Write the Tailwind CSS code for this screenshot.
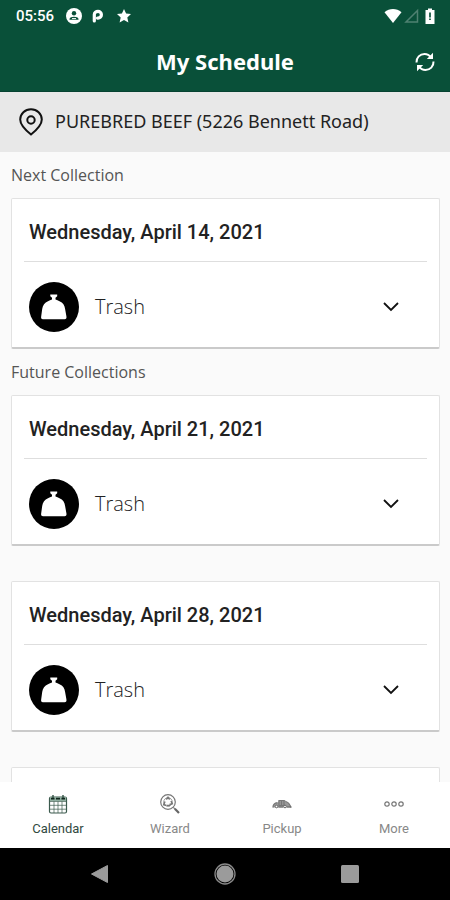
<!DOCTYPE html>
<html lang="en">
<head>
<meta charset="utf-8">
<meta name="viewport" content="width=device-width, initial-scale=1">
<title>My Schedule</title>
<script src="https://cdn.jsdelivr.net/npm/@tailwindcss/browser@4"></script>
</head>
<body class="bg-[#fafafa] font-['Open_Sans',sans-serif] text-[#222]">
<svg class="hidden" aria-hidden="true">
  <symbol id="bag" viewBox="0 0 50 50">
    <circle cx="25" cy="25" r="25" fill="#000"/>
    <path d="M21.300 12.500h6.900v1.800l-1.700 1.500v1.700c1.500.4 2.500 1.200 4 1.700 3.500 1.300 5.200 4 5.600 7.800l1.300 7.200c.4 2-.3 3-1.800 3H14c-1.600 0-2.200-1-1.800-3l1-7.200c.5-3.800 2.500-6.500 5.800-7.800 1.500-.5 2.500-1.300 4-1.700v-1.700l-1.700-1.500z" fill="#fff"/>
  </symbol>
  <symbol id="chevron" viewBox="0 0 16 10">
    <path d="M1 1l7 7 7-7" fill="none" stroke="#111" stroke-width="1.800"/>
  </symbol>
</svg>
<div class="flex h-screen flex-col">
  <header class="shrink-0 border-b border-[#074332] bg-[#095039] text-white">
    <div class="flex h-8 items-center pr-[14px] pl-4">
      <span class="font-['Roboto',sans-serif] text-[15px] font-medium">05:56</span>
      <svg class="ml-3 size-4" viewBox="0 0 16 16" aria-hidden="true"><circle cx="8" cy="8" r="8" fill="#fff"/><circle cx="8" cy="5.300" r="2.200" fill="#095039"/><path d="M3.500 11.800V11c0-1.600 2.500-2.300 4.500-2.300s4.500.7 4.500 2.300v.8z" fill="#095039"/><path d="M6 10.600h4" stroke="#fff" stroke-width="1"/></svg>
      <svg class="ml-[10px] h-4 w-3" viewBox="0 0 12 16" aria-hidden="true"><path d="M2.300 13V6.500C2.300 4.500 4 3.300 6 3.300a3.400 3.400 0 0 1 0 6.800H5.500" fill="none" stroke="#fff" stroke-width="3.200" stroke-linecap="round"/></svg>
      <svg class="ml-3 size-4" viewBox="0 0 16 16" aria-hidden="true"><path d="M8 1l2.100 4.600 4.900.5-3.700 3.400 1.100 5L8 12l-4.400 2.500 1.100-5L1 6.100l4.900-.5z" fill="#fff"/></svg>
      <svg class="ml-auto h-4 w-[18px]" viewBox="0 0 18 16" aria-hidden="true"><path d="M.5 4.200C5.500 0 12.500 0 17.500 4.200L9 15z" fill="#fff"/></svg>
      <svg class="ml-[2px] size-4" viewBox="0 0 16 16" aria-hidden="true"><path d="M13.500 2.500v11.500H2z" fill="none" stroke="#4f8171" stroke-width="1.500"/></svg>
      <svg class="ml-1 h-4 w-3" viewBox="0 0 12 16" aria-hidden="true"><path d="M4 .5h4V2h2.500v14h-9V2H4z" fill="#fff"/><path d="M6 4.500v5M6 10.500v1.500" stroke="#095039" stroke-width="1.700"/></svg>
    </div>
    <div class="grid h-[59px] grid-cols-[50px_1fr_50px] items-center">
      <h1 class="col-start-2 text-center font-['Noto_Sans',sans-serif] text-[22px] font-bold">My Schedule</h1>
      <button type="button" aria-label="Refresh" class="flex h-10 items-center justify-center">
        <svg class="size-5" viewBox="0 0 20 20" fill="none" stroke="#fff" stroke-width="2" aria-hidden="true"><path d="M1.500 10.500C1.200 5.500 5 2 9.500 2c3 0 5 1.300 6.500 3.500M18.500 9.500c.3 5-3.500 8.500-8 8.500-3 0-5-1.300-6.500-3.500"/><path d="M18 .8v6.200h-6.200zM2 19.200V13h6.200z" fill="#fff" stroke="none"/></svg>
      </button>
    </div>
  </header>

  <div class="flex h-[60px] shrink-0 items-center bg-[#e8e8e8] pl-[19px]">
    <svg class="h-7 w-6" viewBox="0 0 24 28" fill="none" stroke="#111" stroke-width="2" aria-hidden="true"><path d="M12 26.500C7 22.500 1.200 17.500 1.200 11.500a10.800 10.300 0 0 1 21.600 0c0 6-5.800 11-10.800 15z"/><circle cx="12" cy="12" r="3.700"/></svg>
    <p class="ml-3 pb-[2px] font-['Noto_Sans',sans-serif] text-lg">PUREBRED BEEF (5226 Bennett Road)</p>
  </div>

  <main class="min-h-0 flex-1 overflow-hidden pr-[10px] pl-[11px]">
    <h2 class="flex h-[46px] items-center text-base text-[#555]">Next Collection</h2>
    <article class="rounded-xs border border-b-2 border-[#e2e2e2] border-b-[#cacaca] bg-white px-3">
      <h3 class="flex h-[63px] items-center border-b border-[#dedede] pl-[5px] pt-1 font-['Roboto',sans-serif] text-xl font-medium">Wednesday, April 14, 2021</h3>
      <button type="button" aria-expanded="false" class="flex h-[85px] w-full items-center pt-1 pr-7 pl-[5px] text-xl font-light text-[#222]"><svg class="size-[50px]" aria-hidden="true"><use href="#bag"/></svg><span class="ml-4">Trash</span><svg class="ml-auto h-[10px] w-4" aria-hidden="true"><use href="#chevron"/></svg></button>
    </article>
    <h2 class="flex h-[46px] items-center text-base text-[#555]">Future Collections</h2>
    <div class="flex flex-col gap-[35px]">
      <article class="rounded-xs border border-b-2 border-[#e2e2e2] border-b-[#cacaca] bg-white px-3">
        <h3 class="flex h-[63px] items-center border-b border-[#dedede] pl-[5px] pt-1 font-['Roboto',sans-serif] text-xl font-medium">Wednesday, April 21, 2021</h3>
        <button type="button" aria-expanded="false" class="flex h-[85px] w-full items-center pt-1 pr-7 pl-[5px] text-xl font-light text-[#222]"><svg class="size-[50px]" aria-hidden="true"><use href="#bag"/></svg><span class="ml-4">Trash</span><svg class="ml-auto h-[10px] w-4" aria-hidden="true"><use href="#chevron"/></svg></button>
      </article>
      <article class="rounded-xs border border-b-2 border-[#e2e2e2] border-b-[#cacaca] bg-white px-3">
        <h3 class="flex h-[63px] items-center border-b border-[#dedede] pl-[5px] pt-1 font-['Roboto',sans-serif] text-xl font-medium">Wednesday, April 28, 2021</h3>
        <button type="button" aria-expanded="false" class="flex h-[85px] w-full items-center pt-1 pr-7 pl-[5px] text-xl font-light text-[#222]"><svg class="size-[50px]" aria-hidden="true"><use href="#bag"/></svg><span class="ml-4">Trash</span><svg class="ml-auto h-[10px] w-4" aria-hidden="true"><use href="#chevron"/></svg></button>
      </article>
      <article class="h-[151px] rounded-xs border border-b-2 border-[#e2e2e2] border-b-[#cacaca] bg-white"></article>
    </div>
  </main>

  <nav aria-label="Main" class="grid h-[66px] shrink-0 grid-cols-4 bg-white pt-3 pl-[2px] font-['Roboto',sans-serif] text-[13px] text-[#888]">
    <a href="#calendar" aria-current="page" class="flex flex-col items-center gap-[5px] text-[#31493f]">
      <svg class="size-5" viewBox="0 0 20 20" fill="none" stroke="#3c5b4e" stroke-width="1.200" aria-hidden="true"><rect x="1.500" y="3" width="17" height="16" rx="1.500"/><path d="M2 3h16v4H2z" fill="#8fae9f" stroke="none"/><path d="M1.500 7.500h17M1.500 11.300h17M1.500 15.200h17M6 7.500V19M10 7.500V19M14 7.500V19" stroke-width=".7"/><path d="M5 1v4M15 1v4" stroke-width="1.500"/><path d="M3 4.700h3.500M8 4.700h4M13.500 4.700H17" stroke="#10251c" stroke-width="1.800"/></svg>
      <span>Calendar</span>
    </a>
    <a href="#wizard" class="flex flex-col items-center gap-[5px]">
      <svg class="size-5" viewBox="0 0 20 20" fill="none" stroke="#777" stroke-width="1.200" aria-hidden="true"><circle cx="8" cy="8" r="7.300"/><path d="M6.300 5.500L8 3.200l1.700 2.300M11 7l1.300 2.700-2.800.8M6.500 11.500l-2.800-.8L5 7.500M7 11.500h3" stroke-width="1.500"/><circle cx="8" cy="8" r="4.300" stroke-width=".7"/><path d="M13.300 13.300l1.500 1.500"/><path d="M14.800 14.800l4.200 4.200" stroke="#666" stroke-width="2.200"/></svg>
      <span>Wizard</span>
    </a>
    <a href="#pickup" class="flex flex-col items-center gap-[5px]">
      <svg class="size-5" viewBox="0 0 20 20" fill="none" stroke="#777" aria-hidden="true"><path d="M.7 13.500c0-2.500 1.300-4 3.300-4.500l2-.5 1-2.500h6l1 1.500c2 .3 4.500 3 5 6z" fill="#999" stroke="none"/><path d="M1 13.500c0-3 2-4.500 4.500-4.800M7 6.500h5v5H7zM13.500 7.500c2.500.5 4.500 3 5.500 6M9.500 6.500v5" stroke-width="1.200"/><circle cx="4.500" cy="12.500" r="1.300" fill="#fff" stroke="#666"/><circle cx="13" cy="12.500" r="1.300" fill="#fff" stroke="#666"/><path d="M6.500 13h4.500M15 13h4.500" stroke="#666" stroke-width="1.200"/></svg>
      <span>Pickup</span>
    </a>
    <a href="#more" class="flex flex-col items-center gap-[5px]">
      <svg class="size-5" viewBox="0 0 20 20" fill="none" stroke="#777" stroke-width="1.200" aria-hidden="true"><circle cx="3" cy="10" r="2.200"/><circle cx="10" cy="10" r="2.200"/><circle cx="17" cy="10" r="2.200"/></svg>
      <span>More</span>
    </a>
  </nav>

  <div class="flex h-[52px] shrink-0 items-center justify-center gap-[101px] bg-black">
    <button type="button" aria-label="Back" class="flex size-6 items-center justify-center"><svg class="size-5" viewBox="0 0 20 20" aria-hidden="true"><path d="M17.500 1.500v17L1.500 10z" fill="#9b9b9b" stroke="#9b9b9b" stroke-linejoin="round"/></svg></button>
    <button type="button" aria-label="Home" class="flex size-6 items-center justify-center"><svg class="size-[22px]" viewBox="0 0 22 22" aria-hidden="true"><circle cx="11" cy="11" r="10" fill="none" stroke="#8a8a8a" stroke-width="1.300"/><circle cx="11" cy="11" r="8.500" fill="#9b9b9b"/></svg></button>
    <button type="button" aria-label="Recent apps" class="flex size-6 items-center justify-center"><svg class="size-[18px]" viewBox="0 0 18 18" aria-hidden="true"><rect width="18" height="18" rx="1.500" fill="#9b9b9b"/></svg></button>
  </div>
</div>
</body>
</html>
